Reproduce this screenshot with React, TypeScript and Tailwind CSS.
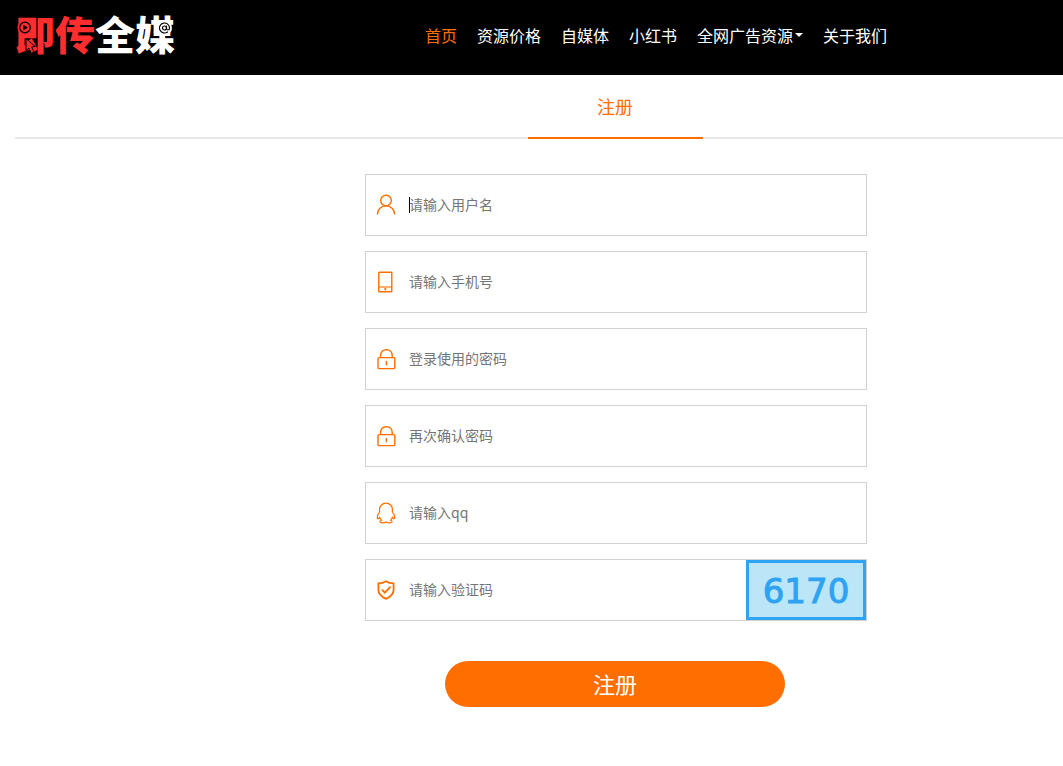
import type { ReactNode } from "react";
import { AtSign } from "lucide-react";

type NavItem = {
  label: string;
  active?: boolean;
  dropdown?: boolean;
};

type FieldProps = {
  id: string;
  type?: string;
  placeholder: string;
  icon: ReactNode;
  caret?: boolean;
  children?: ReactNode;
};

const navItems: Array<NavItem> = [
  { label: "首页", active: true },
  { label: "资源价格" },
  { label: "自媒体" },
  { label: "小红书" },
  { label: "全网广告资源", dropdown: true },
  { label: "关于我们" },
];

const iconProps = {
  width: 20,
  height: 22,
  viewBox: "0 0 20 22",
  fill: "none",
  stroke: "currentColor",
  strokeWidth: 1.4,
  "aria-hidden": true,
};

const UserIcon = () => (
  <svg {...iconProps}>
    <circle cx="10" cy="6.6" r="5.3" />
    <path d="M1.4 20.5c0-4.9 3.8-8.6 8.6-8.6s8.6 3.7 8.6 8.6" />
  </svg>
);

const PhoneIcon = () => (
  <svg {...iconProps}>
    <rect x="2.8" y="1.2" width="13" height="19.6" rx="0.6" />
    <path d="M2.8 16h13" strokeWidth="1.1" />
    <rect x="8.300" y="17.200" width="2" height="2" fill="currentColor" stroke="none" />
  </svg>
);

const LockIcon = () => (
  <svg {...iconProps}>
    <rect x="2" y="9.6" width="16.8" height="11" rx="1.2" />
    <path d="M4.600 9.600V7.500c0-3.300 2.400-5.800 5.800-5.800s5.800 2.500 5.800 5.800v2.100M10.400 13v4.200" />
  </svg>
);

const QqIcon = () => (
  <svg {...iconProps} strokeWidth={1.2}>
    <path d="M10 1.200C6.200 1.200 3.600 3.900 3.600 7.400v2.600c-1.200 1.600-2.300 3.600-2.300 5.200 0 1 .3 1.600.8 1.500.6 0 1.100-.6 1.600-1.300.3 1 .9 2 1.700 2.800-1 .3-1.500.8-1.500 1.400 0 .9 1.200 1.200 2.800 1.200 1.400 0 2.400-.3 3.300-.9.900.600 1.900.9 3.300.9 1.600 0 2.800-.3 2.800-1.200 0-.6-.5-1.100-1.500-1.400.8-.8 1.400-1.800 1.700-2.800.5.700 1 1.300 1.600 1.300.5.100.8-.5.8-1.500 0-1.600-1.100-3.600-2.300-5.200V7.400c0-3.500-2.600-6.200-6.400-6.200z" />
  </svg>
);

const ShieldIcon = () => (
  <svg {...iconProps} strokeWidth={1.8}>
    <path d="M10 2.200C7.800 3.600 5.200 4.300 2.400 4.400v6.400c0 4.300 3.300 7.200 7.600 9 4.300-1.800 7.600-4.700 7.600-9V4.400C14.800 4.300 12.200 3.600 10 2.200z" />
    <path d="M5.900 10.600l3 3 5.600-5.900" />
  </svg>
);

const Logo = () => (
  <a
    href="#"
    className="relative flex shrink-0 pb-1 text-[40px] leading-[54px] font-black text-[#ff2d2d]"
  >
    即传<span className="text-white">全媒</span>
    {/* play badge, pointer and @ sit over the strokes */}
    <svg
      className="absolute top-0 left-0"
      width="160"
      height="54"
      viewBox="0 0 160 54"
      aria-hidden
    >
      <circle cx="10" cy="21.500" r="7.500" fill="#ff2d2d" />
      <circle cx="10" cy="21.500" r="5.300" fill="none" stroke="#000" strokeWidth="1.200" />
      <path d="M8.300 18.700v5.600l4.600-2.800z" fill="#000" />
      <path
        d="M11 32.500v12l2.900-2.300 2.300 5 2.800-1.300-2.400-4.900 3.600-.5z"
        fill="#ff2d2d"
        stroke="#000"
        strokeWidth="1"
      />
      <circle cx="149.500" cy="22" r="7.500" fill="#fff" />
      <AtSign x={143.5} y={16} size={12} color="#000" strokeWidth={2.4} />
    </svg>
  </a>
);

const Field = ({ id, type = "text", placeholder, icon, caret, children }: FieldProps) => (
  <div className="flex h-[62px] w-[502px] items-center border border-[#d2d2d2]">
    <label htmlFor={id} aria-label={placeholder} className="ml-[10px] shrink-0 text-[#ff6e00]">
      {icon}
    </label>
    <div className="relative ml-[13px] h-full min-w-0 flex-1">
      <input
        id={id}
        type={type}
        placeholder={placeholder}
        aria-label={placeholder}
        className="h-full w-full bg-transparent pb-0.5 text-sm text-[#333] outline-none placeholder:text-[#757575]"
      />
      {caret && <span className="absolute top-[22px] left-0 h-4 w-px bg-black" />}
    </div>
    {children}
  </div>
);

const App = () => {
  return (
    <div className="overflow-x-hidden bg-white font-['Noto_Sans_CJK_SC',sans-serif]">
      <div className="min-w-[1230px]">
        {/* HEADER */}
        <header className="bg-black">
          <div className="mx-auto flex h-[75px] w-[1200px] items-center pb-1.5">
            <Logo />
            <nav className="ml-[250px] flex gap-5 text-base text-white">
              {navItems.map((item) => (
                <a
                  key={item.label}
                  href="#"
                  className={item.active ? "text-[#ff6e00]" : "flex items-center"}
                >
                  {item.label}
                  {item.dropdown && (
                    <span className="ml-0.5 border-x-4 border-t-4 border-x-transparent border-t-white" />
                  )}
                </a>
              ))}
            </nav>
          </div>
        </header>

        <main className="mx-auto w-[1200px] pb-14">
          {/* TAB */}
          <div className="flex h-16 justify-center border-b-2 border-[#e8e8e8]">
            <h1 className="-mb-0.5 w-[175px] border-b-2 border-[#ff6e00] text-center text-lg leading-[62px] text-[#ff6e00]">
              注册
            </h1>
          </div>

          {/* FORM */}
          <form className="mx-auto mt-[35px] flex w-[500px] flex-col gap-[15px]">
            <Field id="username" placeholder="请输入用户名" icon={<UserIcon />} caret />
            <Field id="phone" placeholder="请输入手机号" icon={<PhoneIcon />} />
            <Field
              id="password"
              type="password"
              placeholder="登录使用的密码"
              icon={<LockIcon />}
            />
            <Field
              id="confirm"
              type="password"
              placeholder="再次确认密码"
              icon={<LockIcon />}
            />
            <Field id="qq" placeholder="请输入qq" icon={<QqIcon />} />
            <Field id="captcha" placeholder="请输入验证码" icon={<ShieldIcon />}>
              <button
                type="button"
                className="h-[60px] w-[120px] shrink-0 border-[3px] border-[#2ea3f2] bg-[#bae6f8] pt-0.5 font-['DejaVu_Sans',sans-serif] text-[34px] leading-[52px] text-[#2ea3f2] [-webkit-text-stroke:1px_#2ea3f2]"
              >
                6170
              </button>
            </Field>
            <button
              type="button"
              className="mx-auto mt-[25px] h-[46px] w-[340px] rounded-full bg-[#ff6e00] pb-0.5 text-[22px] text-white"
            >
              注册
            </button>
          </form>
        </main>
      </div>
    </div>
  );
};

export default App;
